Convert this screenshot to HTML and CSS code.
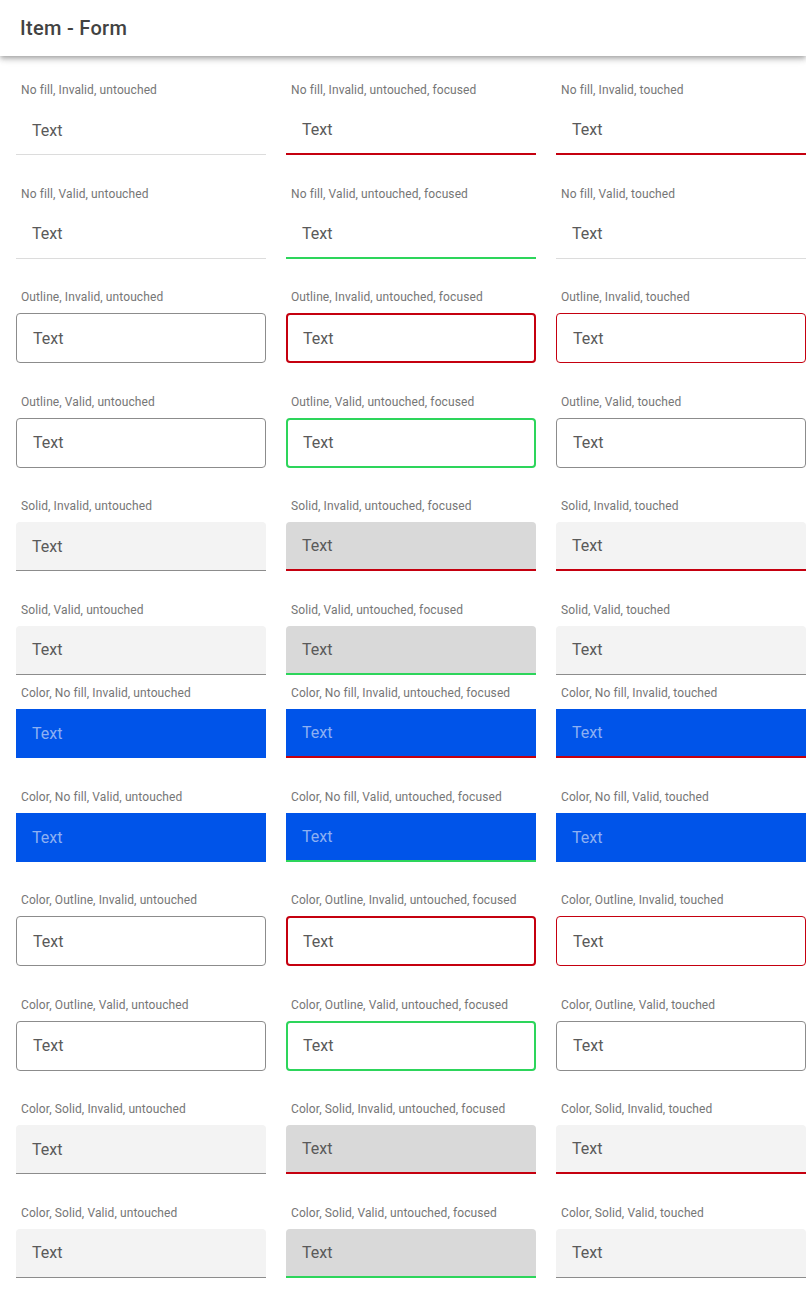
FILE: index.html
```html
<!DOCTYPE html>
<html lang="en">
<head>
<meta charset="utf-8">
<title>Item - Form</title>
<link rel="stylesheet" href="styles.css">
</head>
<body>
<header class="toolbar"><h1 class="title">Item - Form</h1></header>
<main class="content">
  <section class="grid">
    <div class="item"><div class="label">No fill, Invalid, untouched</div><div class="field nofill"><span class="value">Text</span></div></div>
    <div class="item"><div class="label">No fill, Invalid, untouched, focused</div><div class="field nofill red2"><span class="value">Text</span></div></div>
    <div class="item"><div class="label">No fill, Invalid, touched</div><div class="field nofill red2"><span class="value">Text</span></div></div>

    <div class="item"><div class="label">No fill, Valid, untouched</div><div class="field nofill"><span class="value">Text</span></div></div>
    <div class="item"><div class="label">No fill, Valid, untouched, focused</div><div class="field nofill green2"><span class="value">Text</span></div></div>
    <div class="item"><div class="label">No fill, Valid, touched</div><div class="field nofill"><span class="value">Text</span></div></div>

    <div class="item"><div class="label">Outline, Invalid, untouched</div><div class="field outline"><span class="value">Text</span></div></div>
    <div class="item"><div class="label">Outline, Invalid, untouched, focused</div><div class="field outline red2"><span class="value">Text</span></div></div>
    <div class="item"><div class="label">Outline, Invalid, touched</div><div class="field outline red1"><span class="value">Text</span></div></div>

    <div class="item"><div class="label">Outline, Valid, untouched</div><div class="field outline"><span class="value">Text</span></div></div>
    <div class="item"><div class="label">Outline, Valid, untouched, focused</div><div class="field outline green2"><span class="value">Text</span></div></div>
    <div class="item"><div class="label">Outline, Valid, touched</div><div class="field outline"><span class="value">Text</span></div></div>

    <div class="item"><div class="label">Solid, Invalid, untouched</div><div class="field solid"><span class="value">Text</span></div></div>
    <div class="item"><div class="label">Solid, Invalid, untouched, focused</div><div class="field solid focused red2"><span class="value">Text</span></div></div>
    <div class="item"><div class="label">Solid, Invalid, touched</div><div class="field solid red2"><span class="value">Text</span></div></div>

    <div class="item"><div class="label">Solid, Valid, untouched</div><div class="field solid"><span class="value">Text</span></div></div>
    <div class="item"><div class="label">Solid, Valid, untouched, focused</div><div class="field solid focused green2"><span class="value">Text</span></div></div>
    <div class="item"><div class="label">Solid, Valid, touched</div><div class="field solid"><span class="value">Text</span></div></div>
  </section>

  <section class="grid color-grid">
    <div class="item"><div class="label">Color, No fill, Invalid, untouched</div><div class="field blue"><span class="value">Text</span></div></div>
    <div class="item"><div class="label">Color, No fill, Invalid, untouched, focused</div><div class="field blue red2"><span class="value">Text</span></div></div>
    <div class="item"><div class="label">Color, No fill, Invalid, touched</div><div class="field blue red2"><span class="value">Text</span></div></div>

    <div class="item"><div class="label">Color, No fill, Valid, untouched</div><div class="field blue"><span class="value">Text</span></div></div>
    <div class="item"><div class="label">Color, No fill, Valid, untouched, focused</div><div class="field blue green2"><span class="value">Text</span></div></div>
    <div class="item"><div class="label">Color, No fill, Valid, touched</div><div class="field blue"><span class="value">Text</span></div></div>

    <div class="item"><div class="label">Color, Outline, Invalid, untouched</div><div class="field outline"><span class="value">Text</span></div></div>
    <div class="item"><div class="label">Color, Outline, Invalid, untouched, focused</div><div class="field outline red2"><span class="value">Text</span></div></div>
    <div class="item"><div class="label">Color, Outline, Invalid, touched</div><div class="field outline red1"><span class="value">Text</span></div></div>

    <div class="item"><div class="label">Color, Outline, Valid, untouched</div><div class="field outline"><span class="value">Text</span></div></div>
    <div class="item"><div class="label">Color, Outline, Valid, untouched, focused</div><div class="field outline green2"><span class="value">Text</span></div></div>
    <div class="item"><div class="label">Color, Outline, Valid, touched</div><div class="field outline"><span class="value">Text</span></div></div>

    <div class="item"><div class="label">Color, Solid, Invalid, untouched</div><div class="field solid"><span class="value">Text</span></div></div>
    <div class="item"><div class="label">Color, Solid, Invalid, untouched, focused</div><div class="field solid focused red2"><span class="value">Text</span></div></div>
    <div class="item"><div class="label">Color, Solid, Invalid, touched</div><div class="field solid red2"><span class="value">Text</span></div></div>

    <div class="item"><div class="label">Color, Solid, Valid, untouched</div><div class="field solid"><span class="value">Text</span></div></div>
    <div class="item"><div class="label">Color, Solid, Valid, untouched, focused</div><div class="field solid focused green2"><span class="value">Text</span></div></div>
    <div class="item"><div class="label">Color, Solid, Valid, touched</div><div class="field solid"><span class="value">Text</span></div></div>
  </section>
</main>
</body>
</html>
```
FILE: styles.css
```css
* { box-sizing: border-box; }
html, body {
  margin: 0;
  padding: 0;
  background: #ffffff;
  font-family: Roboto, "Noto Sans", "Liberation Sans", sans-serif;
  overflow: hidden;
}
.toolbar {
  height: 56px;
  background: #ffffff;
  display: flex;
  align-items: center;
  padding: 0 20px;
  box-shadow: 0 2px 4px -1px rgba(0,0,0,0.2), 0 4px 5px 0 rgba(0,0,0,0.14), 0 1px 10px 0 rgba(0,0,0,0.12);
  position: relative;
  z-index: 2;
}
.title {
  margin: 0;
  font-size: 20px;
  font-weight: 500;
  color: #424242;
  letter-spacing: 0.3px;
}
.content {
  padding: 25px 0 0 16px;
  width: 806px;
}
.grid {
  display: grid;
  grid-template-columns: 250px 250px 250px;
  column-gap: 20px;
  row-gap: 29.5px;
}
.color-grid {
  margin-top: 9.5px;
}
.item {
  display: flex;
  flex-direction: column;
}
.label {
  font-size: 12px;
  line-height: 16px;
  color: #767676;
  padding-left: 5px;
  padding-top: 1px;
  margin-bottom: 8px;
  letter-spacing: 0.1px;
  white-space: nowrap;
}
.field {
  height: 49px;
  display: flex;
  align-items: center;
  padding-left: 16px;
  padding-top: 1px;
  font-size: 16px;
  color: #5a5a5a;
}
.value { line-height: 20px; }
.nofill {
  border-bottom: 1px solid #dcdcdc;
}
.outline {
  height: 50px;
  border: 1px solid #8c8c8c;
  border-radius: 4px;
  padding-left: 16px;
}
.solid {
  background: #f3f3f3;
  border-radius: 4px 4px 0 0;
  border-bottom: 1px solid #8c8c8c;
}
.solid.focused {
  background: #d9d9d9;
}
.blue {
  background: #0054e9;
  color: #8db0f2;
}
.nofill.red2, .solid.red2, .blue.red2 { border-bottom: 2px solid #c5000f; }
.nofill.green2, .solid.green2, .blue.green2 { border-bottom: 2px solid #2dd55b; }
.outline.red2 { border: 2px solid #c5000f; padding-left: 15px; }
.outline.red1 { border: 1px solid #c5000f; }
.outline.green2 { border: 2px solid #2dd55b; padding-left: 15px; }
```
